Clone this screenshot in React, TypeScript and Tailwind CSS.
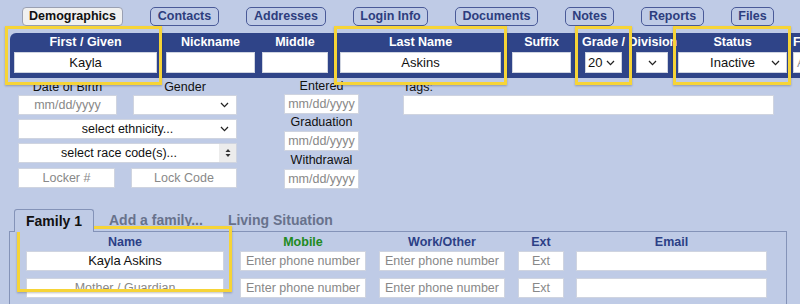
import React from 'react';

const Chevron = () => (
  <svg width="9" height="6" viewBox="0 0 9 6" className="shrink-0">
    <polyline points="1,1 4.5,4.6 8,1" fill="none" stroke="#222" strokeWidth="1.3" />
  </svg>
);

const Stepper = () => (
  <div className="flex h-full w-[17px] items-center justify-center bg-[#ececec]">
    <svg width="6" height="10" viewBox="0 0 6 10">
      <polygon points="3,1 5.5,4 0.5,4" fill="#333" />
      <polygon points="3,9 5.5,6 0.5,6" fill="#333" />
    </svg>
  </div>
);

const topTabs = [
  { label: 'Contacts', w: 'w-[69px]' },
  { label: 'Addresses', w: 'w-[80px]' },
  { label: 'Login Info', w: 'w-[75px]' },
  { label: 'Documents', w: 'w-[83px]' },
  { label: 'Notes', w: 'w-[49px]' },
  { label: 'Reports', w: 'w-[63px]' },
  { label: 'Files', w: 'w-[43px]' },
];

function Field({ children, className = '' }: { children?: React.ReactNode; className?: string }) {
  return (
    <div className={`flex h-[20px] shrink-0 items-center border border-[#cfd4e0] bg-white text-[12.5px] ${className}`}>
      {children}
    </div>
  );
}

function Highlight({ className }: { className: string }) {
  return (
    <div
      className={`pointer-events-none absolute border-[3px] border-[#f6d437] shadow-[0_1px_2px_rgba(0,0,0,0.25)] ${className}`}
    />
  );
}

export default function App() {
  return (
    <div
      className="relative h-[304px] w-[800px] overflow-hidden bg-[#bfcbe6] text-[12.5px] text-[#111]"
      style={{ fontFamily: '"Liberation Sans", Arial, sans-serif' }}
    >
      {/* top tabs */}
      <div className="flex gap-[27px] pl-[22px] pt-[7px]">
        <div className="flex h-[19px] w-[101px] shrink-0 items-center justify-center rounded-[4px] border border-[#9aa0b2] bg-[#f0f0f0] font-bold">
          Demographics
        </div>
        {topTabs.map((t) => (
          <div
            key={t.label}
            className={`flex h-[19px] shrink-0 items-center justify-center rounded-[5px] border border-[#4a5a98] font-bold text-[#2d3d7e] ${t.w}`}
          >
            {t.label}
          </div>
        ))}
      </div>

      {/* name band */}
      <div className="ml-[10px] mt-[7px] flex w-[900px] rounded-tl-[6px] bg-[#2f4488] pb-[5px] pl-[4px] pt-[1px] font-bold text-white [&>div]:shrink-0">
        <div className="flex w-[143px] flex-col items-center">
          <div className="h-[16px] leading-[16px]">First / Given</div>
          <div className="mt-[2px] flex h-[21px] w-full items-center justify-center border border-[#cfd4e0] bg-white text-[13px] font-normal text-[#111]">
            Kayla
          </div>
        </div>
        <div className="ml-[9px] flex w-[89px] flex-col items-center">
          <div className="h-[16px] leading-[16px]">Nickname</div>
          <div className="mt-[2px] h-[21px] w-full border border-[#cfd4e0] bg-white" />
        </div>
        <div className="ml-[7px] flex w-[66px] flex-col items-center">
          <div className="h-[16px] leading-[16px]">Middle</div>
          <div className="mt-[2px] h-[21px] w-full border border-[#cfd4e0] bg-white" />
        </div>
        <div className="ml-[12px] flex w-[161px] flex-col items-center">
          <div className="h-[16px] leading-[16px]">Last Name</div>
          <div className="mt-[2px] flex h-[21px] w-full items-center justify-center border border-[#cfd4e0] bg-white text-[13px] font-normal text-[#111]">
            Askins
          </div>
        </div>
        <div className="ml-[11px] flex w-[59px] flex-col items-center">
          <div className="h-[16px] leading-[16px]">Suffix</div>
          <div className="mt-[2px] h-[21px] w-full border border-[#cfd4e0] bg-white" />
        </div>
        <div className="ml-[14px] flex w-[37px] flex-col">
          <div className="-ml-[3px] h-[16px] w-[95px] overflow-hidden whitespace-nowrap leading-[16px]">
            Grade / Division
          </div>
          <div className="mt-[2px] flex h-[21px] w-full items-center justify-between border border-[#cfd4e0] bg-white pl-[2px] pr-[6px] text-[13px] font-normal text-[#111]">
            20
            <Chevron />
          </div>
        </div>
        <div className="ml-[14px] flex w-[32px] flex-col">
          <div className="h-[16px]" />
          <div className="mt-[2px] flex h-[21px] w-full items-center justify-center border border-[#cfd4e0] bg-white">
            <Chevron />
          </div>
        </div>
        <div className="ml-[10px] flex w-[109px] flex-col items-center">
          <div className="h-[16px] leading-[16px]">Status</div>
          <div className="relative mt-[2px] flex h-[21px] w-full items-center justify-center border border-[#cfd4e0] bg-white text-[13px] font-normal text-[#111]">
            Inactive
            <div className="absolute right-[6px] top-[7px]">
              <Chevron />
            </div>
          </div>
        </div>
        <div className="ml-[6px] flex w-[60px] flex-col">
          <div className="h-[16px] whitespace-nowrap leading-[16px]">Family</div>
          <div className="mt-[2px] flex h-[21px] w-full items-center border border-[#cfd4e0] bg-white pl-[3px] text-[13px] font-normal text-[#999]">
            Alias
          </div>
        </div>
      </div>

      {/* details */}
      <div className="flex items-start pl-[18px]">
        <div className="flex w-[219px] shrink-0 flex-col">
          <div className="flex">
            <div className="flex w-[99px] flex-col items-center">
              <div className="mt-[1px] h-[16px] leading-[16px]">Date of Birth</div>
              <Field className="w-full justify-center text-[#888]">mm/dd/yyyy</Field>
            </div>
            <div className="ml-[16px] flex w-[104px] flex-col items-center">
              <div className="mt-[1px] h-[16px] leading-[16px]">Gender</div>
              <Field className="w-full justify-end pr-[7px]">
                <Chevron />
              </Field>
            </div>
          </div>
          <Field className="relative mt-[4px] w-full justify-center">
            select ethnicity...
            <div className="absolute right-[7px] top-[6px]">
              <Chevron />
            </div>
          </Field>
          <Field className="mt-[4px] w-full">
            <div className="flex-1 text-center">select race code(s)...</div>
            <Stepper />
          </Field>
          <div className="mt-[5px] flex">
            <Field className="w-[97px] justify-center text-[#888]">Locker #</Field>
            <Field className="ml-[16px] w-[106px] justify-center text-[#888]">Lock Code</Field>
          </div>
        </div>

        <div className="ml-[47px] flex w-[75px] shrink-0 flex-col items-center">
          <div className="mt-[1px] h-[15px] leading-[15px]">Entered</div>
          <Field className="w-full justify-center text-[#888]">mm/dd/yyyy</Field>
          <div className="h-[17px] leading-[17px]">Graduation</div>
          <Field className="w-full justify-center text-[#888]">mm/dd/yyyy</Field>
          <div className="h-[18px] leading-[18px]">Withdrawal</div>
          <Field className="w-full justify-center text-[#888]">mm/dd/yyyy</Field>
        </div>

        <div className="ml-[44px] flex w-[371px] shrink-0 flex-col">
          <div className="mt-[1px] h-[16px] leading-[16px]">Tags:</div>
          <Field className="w-full" />
        </div>
      </div>

      {/* family tabs */}
      <div className="mt-[20px] flex items-center pl-[14px] font-bold">
        <div className="relative z-10 -mb-px flex h-[23px] w-[80px] items-center justify-center rounded-t-[3px] border border-b-0 border-[#8493b8] bg-[#bfcbe6] text-[14px] text-[#111]">
          Family 1
        </div>
        <div className="ml-[15px] text-[14px] text-[#68728c]">Add a family...</div>
        <div className="ml-[25px] text-[14px] text-[#68728c]">Living Situation</div>
      </div>

      {/* family panel */}
      <div className="ml-[9px] flex w-[778px] border border-[#8493b8] pb-[10px] pt-[2px] font-normal [&>div]:shrink-0">
        <div className="ml-[16px] flex w-[198px] flex-col items-center">
          <div className="h-[17px] font-bold leading-[17px] text-[#2c3f86]">Name</div>
          <Field className="w-full justify-center text-[13px]">Kayla Askins</Field>
          <Field className="mt-[7px] w-full justify-center text-[#888]">Mother / Guardian</Field>
        </div>
        <div className="ml-[16px] flex w-[126px] flex-col items-center">
          <div className="h-[17px] font-bold leading-[17px] text-[#218a1f]">Mobile</div>
          <Field className="w-full justify-center text-[#888]">Enter phone number</Field>
          <Field className="mt-[7px] w-full justify-center text-[#888]">Enter phone number</Field>
        </div>
        <div className="ml-[13px] flex w-[126px] flex-col items-center">
          <div className="h-[17px] font-bold leading-[17px] text-[#2c3f86]">Work/Other</div>
          <Field className="w-full justify-center text-[#888]">Enter phone number</Field>
          <Field className="mt-[7px] w-full justify-center text-[#888]">Enter phone number</Field>
        </div>
        <div className="ml-[13px] flex w-[46px] flex-col items-center">
          <div className="h-[17px] font-bold leading-[17px] text-[#2c3f86]">Ext</div>
          <Field className="w-full justify-center text-[#888]">Ext</Field>
          <Field className="mt-[7px] w-full justify-center text-[#888]">Ext</Field>
        </div>
        <div className="ml-[12px] flex w-[191px] flex-col items-center">
          <div className="h-[17px] font-bold leading-[17px] text-[#2c3f86]">Email</div>
          <Field className="w-full" />
          <Field className="mt-[7px] w-full" />
        </div>
      </div>

      {/* annotation boxes */}
      <Highlight className="left-[5px] top-[26px] h-[59px] w-[157px]" />
      <Highlight className="left-[334px] top-[26px] h-[59px] w-[173px]" />
      <Highlight className="left-[575px] top-[26px] h-[59px] w-[57px]" />
      <Highlight className="left-[673px] top-[26px] h-[59px] w-[118px]" />
      <Highlight className="left-[17px] top-[226px] h-[66px] w-[215px]" />
    </div>
  );
}
